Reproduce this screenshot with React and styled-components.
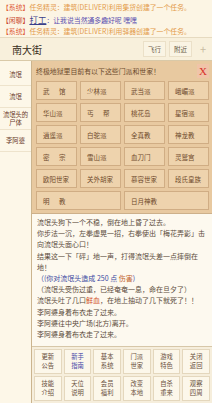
import React from "react";
import styled, { createGlobalStyle } from "styled-components";

const Global = createGlobalStyle`
  html, body { margin: 0; padding: 0; background: #fcf5e4; }
  body { font-family: "Noto Sans CJK SC", "Noto Sans", sans-serif; }
  * { box-sizing: border-box; }
`;

const Page = styled.div`
  width: 212px;
  height: 403px;
  overflow: hidden;
  display: flex;
  flex-direction: column;
  background: #fcf5e4;
`;

const Broadcast = styled.div`
  padding: 1px 2px 0;
  height: 37px;
  display: flex;
  flex-direction: column;
`;

const BLine = styled.div`
  font-size: 6.85px;
  line-height: 12px;
  white-space: nowrap;
  overflow: hidden;
  color: ${(p) => p.$color || "#e39a4a"};
`;

const Tag = styled.span`
  color: ${(p) => p.$color};
`;

const Who = styled.span`
  color: #3a3f8a;
  text-decoration: underline;
  font-size: 8.5px;
`;

const Header = styled.div`
  height: 24px;
  display: flex;
  align-items: center;
  padding: 0 6px 0 12px;
  background: #f8f0dc;
  border-top: 1px solid #e6dac0;
  border-bottom: 1px solid #d9c9a8;
`;

const Place = styled.div`
  flex: 1;
  font-size: 10px;
  color: #3a2e22;
`;

const HBtn = styled.div`
  font-size: 6.5px;
  color: #6a5a48;
  height: 16px;
  padding: 0 4px;
  margin-left: 3px;
  display: flex;
  align-items: center;
  border: 1px solid #ebe0c8;
  background: #faf4e4;
`;

const Plus = styled.div`
  font-size: 11px;
  color: #c8bba2;
  margin-left: 8px;
  line-height: 1;
`;

const Body = styled.div`
  flex: 1;
  display: flex;
  min-height: 0;
`;

const Sidebar = styled.div`
  width: 31px;
  padding-top: 3px;
  display: flex;
  flex-direction: column;
  background: #fdf7e8;
`;

const SideItem = styled.div`
  height: 22px;
  display: flex;
  align-items: center;
  justify-content: center;
  text-align: center;
  font-size: 6.3px;
  line-height: 8px;
  color: #6b3a2a;
  border-bottom: 1px solid #eee3cc;
  padding: 0 2px;
`;

const Main = styled.div`
  flex: 1;
  display: flex;
  flex-direction: column;
  border-left: 1px solid #cbb48e;
  min-width: 0;
`;

const Dialog = styled.div`
  background: #e8c9a0;
  padding: 2px 3px 3px 4px;
  border-bottom: 1px solid #cdb08a;
`;

const DTitle = styled.div`
  height: 16px;
  display: flex;
  align-items: center;
  font-size: 6.9px;
  color: #6b4a2c;
`;

const DText = styled.div`
  flex: 1;
  white-space: nowrap;
`;

const Close = styled.div`
  color: #d8322a;
  font-family: "Liberation Serif", serif;
  font-size: 11px;
  width: 12px;
  height: 14px;
  display: flex;
  align-items: center;
  justify-content: center;
  background: #f0c4a8;
`;

const Grid = styled.div`
  margin-top: 2px;
  display: grid;
  grid-template-columns: repeat(4, 1fr);
  grid-auto-rows: 19px;
  gap: 3px;
`;

const Cell = styled.div`
  grid-column: span ${(p) => p.$span || 1};
  display: flex;
  align-items: center;
  padding-left: 6px;
  background: #eed3ad;
  border: 1px solid #d0ad84;
  font-size: 6.5px;
  color: #6e4a2c;
  white-space: nowrap;
  letter-spacing: ${(p) => (p.$wide ? "4px" : "0")};
`;

const Log = styled.div`
  flex: 1;
  background: #fdf9ef;
  padding: 3px 2px 0 5px;
  font-size: 7px;
  line-height: 11.2px;
  color: #5c4c3c;
  min-height: 0;
  overflow: hidden;
`;

const LLine = styled.div`
  white-space: nowrap;
  color: ${(p) => p.$color || "inherit"};
`;

const Hi = styled.span`
  color: ${(p) => p.$color};
`;

const Menu = styled.div`
  display: grid;
  grid-template-columns: repeat(6, 1fr);
  grid-auto-rows: 25px;
  gap: 2px;
  padding: 2px;
  background: #f6eedc;
  border-top: 1px solid #d7c7a8;
`;

const MBtn = styled.div`
  display: flex;
  align-items: center;
  justify-content: center;
  text-align: center;
  font-size: 6.3px;
  line-height: 8.5px;
  color: ${(p) => (p.$hl ? "#4a4aa8" : "#6a5040")};
  background: #fcf7ea;
  border: 1px solid #e4d7bd;
`;

const sects = [
  ["武 馆", 1, true],
  ["少林派"],
  ["武当派"],
  ["峨嵋派"],
  ["华山派"],
  ["丐 帮", 1, true],
  ["桃花岛"],
  ["星宿派"],
  ["逍遥派"],
  ["白驼派"],
  ["全真教"],
  ["神龙教"],
  ["密 宗", 1, true],
  ["雪山派"],
  ["血刀门"],
  ["灵鹫宫"],
  ["欧阳世家"],
  ["关外胡家"],
  ["慕容世家"],
  ["段氏皇族"],
  ["明 教", 2, true],
  ["日月神教", 2],
];

const menu = [
  ["更新", "公告"],
  ["新手", "指南", true],
  ["基本", "系统"],
  ["门派", "世家"],
  ["游戏", "特色"],
  ["关闭", "返回"],
  ["技能", "介绍"],
  ["天位", "说明"],
  ["会员", "福利"],
  ["改变", "本地"],
  ["自杀", "重来"],
  ["观察", "四周"],
];

export default function App() {
  return (
    <Page>
      <Global />
      <Broadcast>
        <BLine>
          <Tag $color="#e0603a">【系统】</Tag>任务精灵：建筑(DELIVER)利用集货创建了一个任务。
        </BLine>
        <BLine $color="#5a4fb0">
          <Tag $color="#c8452e">【闲聊】</Tag>
          <Who>打工</Who>：让我说当然通多趣好呢 嘿嘿
        </BLine>
        <BLine>
          <Tag $color="#e0603a">【系统】</Tag>任务精灵：建筑(DELIVER)利用驿器创建了一个任务。
        </BLine>
      </Broadcast>
      <Header>
        <Place>南大街</Place>
        <HBtn>飞行</HBtn>
        <HBtn>附近</HBtn>
        <Plus>+</Plus>
      </Header>
      <Body>
        <Sidebar>
          <SideItem>流氓</SideItem>
          <SideItem>流氓</SideItem>
          <SideItem>流氓头的尸体</SideItem>
          <SideItem>李阿婆</SideItem>
        </Sidebar>
        <Main>
          <Dialog>
            <DTitle>
              <DText>终极地狱里目前有以下这些门派和世家！</DText>
              <Close>X</Close>
            </DTitle>
            <Grid>
              {sects.map(([name, span, wide]) => (
                <Cell key={name} $span={span} $wide={wide}>
                  {name}
                </Cell>
              ))}
            </Grid>
          </Dialog>
          <Log>
            <LLine>流氓头狗下一个不稳，倒在地上昏了过去。</LLine>
            <LLine>你步法一沉，左拳虚晃一招，右拳使出「梅花弄影」击</LLine>
            <LLine>向流氓头面心口！</LLine>
            <LLine>结果这一下「砰」地一声，打得流氓头差一点摔倒在</LLine>
            <LLine>地！</LLine>
            <LLine $color="#3a48a0">
              （(你对流氓头造成 250 点 <Hi $color="#c0602a">伤害</Hi>)
            </LLine>
            <LLine>（流氓头受伤过重，已经奄奄一息，命在旦夕了）</LLine>
            <LLine>
              流氓头吐了几口<Hi $color="#d0502a">鲜血</Hi>，在地上抽动了几下就死了！！
            </LLine>
            <LLine>李阿婆身着布衣走了过来。</LLine>
            <LLine>李阿婆往中央广场(北方)离开。</LLine>
            <LLine>李阿婆身着布衣走了过来。</LLine>
          </Log>
          <Menu>
            {menu.map(([a, b, hl]) => (
              <MBtn key={a + b} $hl={hl}>
                {a}
                <br />
                {b}
              </MBtn>
            ))}
          </Menu>
        </Main>
      </Body>
    </Page>
  );
}
